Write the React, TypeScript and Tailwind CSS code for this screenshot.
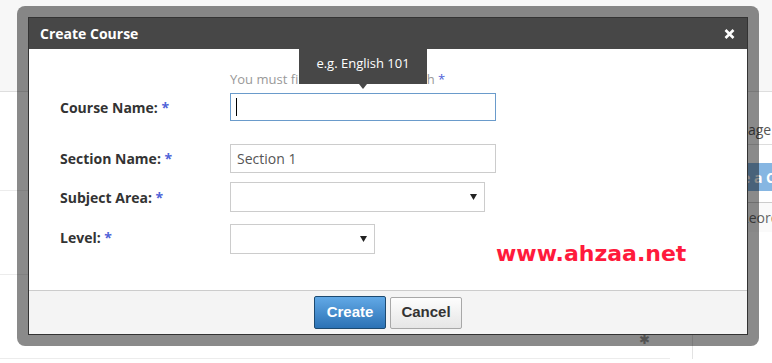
import React from "react";

function Req() {
  return <span className="text-[#4f63d8]"> *</span>;
}

function Caret() {
  return (
    <svg width="7" height="6" viewBox="0 0 7 6">
      <path d="M0 0h7L3.5 6z" fill="#222" />
    </svg>
  );
}

function FieldRow({ label, children, className }: { label: string; children: React.ReactNode; className?: string }) {
  return (
    <div className={`flex items-center ${className ?? ""}`}>
      <div className="w-[170px] text-[14px] font-bold text-[#333]">
        {label}
        <Req />
      </div>
      {children}
    </div>
  );
}

export default function App() {
  return (
    <div className="relative h-[363px] w-[772px] overflow-hidden bg-white font-['Open_Sans',sans-serif]">
      {/* page behind the dialog */}
      <div className="h-[92px] border-b border-[#dedede] bg-[#f7f7f7]" />
      <div className="flex">
        <div className="w-[692px] shrink-0">
          <div className="h-[99px] border-b border-[#ececec]" />
          <div className="h-[84px] border-b border-[#ececec]" />
          <div className="h-[84px] w-[670px] border-b border-[#ececec] pl-[639px] pt-[51px]">
            <span className="text-[13px] leading-none text-[#999]">✱</span>
          </div>
        </div>
        <div className="min-w-0 flex-1 overflow-hidden border-l border-[#e3e3e3] pt-[28px]">
          <div className="border-b border-[#ddd] pb-[4px] pl-[26px] text-[14px] leading-[20px] whitespace-nowrap text-[#555]">
            Manage
          </div>
          <div className="mt-[18px] ml-[6px] flex h-[28px] items-center bg-[#86b6e2] pl-[5px] text-[14px] font-bold whitespace-nowrap text-white">
            Create a Course
          </div>
          <div className="mt-[11px] flex h-[30px] items-center border-t border-l border-[#ccc] bg-[#fafafa] pl-[46px] text-[14px] whitespace-nowrap text-[#666]">
            Reorder
          </div>
        </div>
      </div>

      {/* dialog */}
      <div className="absolute left-[17px] top-[6px] h-[340px] w-[742px] rounded-[8px] bg-[rgba(0,0,0,0.46)] p-[11px]">
        <div className="relative flex h-full flex-col border border-[#333] bg-white">
          <div className="flex h-[31px] items-center justify-between bg-[#474747] pl-[11px] pr-[12px]">
            <span className="text-[14px] font-bold text-white">Create Course</span>
            <svg width="11" height="10" viewBox="0 0 11 10">
              <path d="M1.5 1 9.5 9M9.5 1 1.5 9" stroke="#fff" strokeWidth="2.6" />
            </svg>
          </div>

          <div className="relative flex-1 pl-[31px] pt-[21px]">
            <div className="h-[18px] pl-[170px] text-[13px] leading-[18px] text-[#999]">
              You must fill in fields marked with<Req />
            </div>

            <FieldRow label="Course Name:" className="mt-[5px]">
              <div className="flex h-[28px] w-[266px] items-center border border-[#6a9bcb] pl-[5px]">
                <span className="h-[18px] w-px bg-black" />
              </div>
            </FieldRow>

            <FieldRow label="Section Name:" className="mt-[23px]">
              <div className="flex h-[29px] w-[266px] items-center border border-[#ccc] pl-[6px] text-[14px] text-[#555]">
                Section 1
              </div>
            </FieldRow>

            <FieldRow label="Subject Area:" className="mt-[9px]">
              <div className="flex h-[30px] w-[255px] items-center justify-end border border-[#ccc] pr-[7px]">
                <Caret />
              </div>
            </FieldRow>

            <div className="mt-[12px] flex items-start">
              <div className="w-[170px] pt-[3px] text-[14px] font-bold text-[#333]">
                Level:<Req />
              </div>
              <div className="flex h-[30px] w-[145px] items-center justify-end border border-[#ccc] pr-[7px]">
                <Caret />
              </div>
            </div>

            {/* tooltip */}
            <div className="absolute left-[270px] top-[-5px] flex h-[40px] w-[128px] items-center justify-center bg-[#474747] text-[13px] text-white">
              e.g. English 101
              <span className="absolute bottom-[-5px] left-[60px] h-0 w-0 border-x-[4px] border-t-[5px] border-x-transparent border-t-[#474747]" />
            </div>

            {/* watermark */}
            <div className="absolute left-[467px] top-[192px] font-['DejaVu_Sans',sans-serif] text-[22px] leading-[26px] font-bold text-[#ff1a3c]">
              www.ahzaa.net
            </div>
          </div>

          <div className="flex h-[44px] items-center justify-center gap-[4px] border-t border-[#ccc] bg-[#f4f4f4]">
            <button className="h-[33px] w-[72px] rounded-[2px] border border-[#1d4a70] bg-gradient-to-b from-[#62a9e6] to-[#2b72b5] font-['Liberation_Sans',sans-serif] text-[15px] font-bold text-white">
              Create
            </button>
            <button className="h-[32px] w-[72px] rounded-[2px] border border-[#a8a8a8] bg-gradient-to-b from-[#fdfdfd] to-[#e6e6e6] font-['Liberation_Sans',sans-serif] text-[15px] font-bold text-[#333]">
              Cancel
            </button>
          </div>
        </div>
      </div>
    </div>
  );
}
